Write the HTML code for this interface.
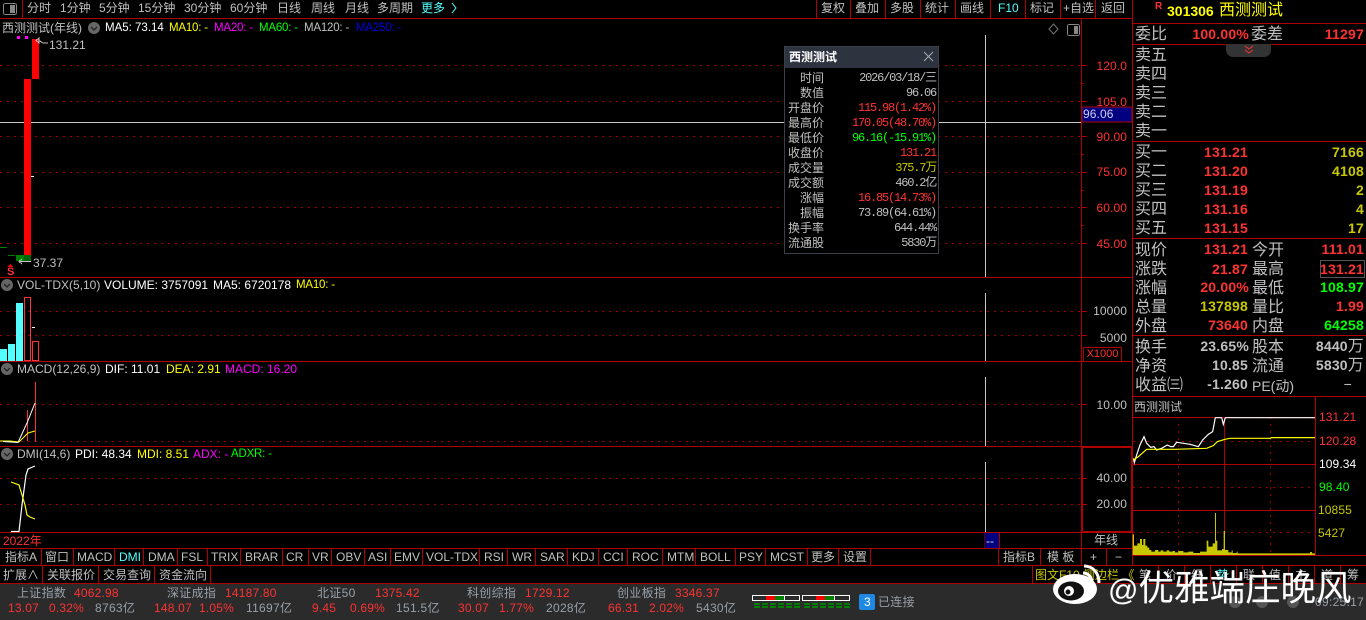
<!DOCTYPE html>
<html lang="zh"><head><meta charset="utf-8"><title>西测测试</title>
<style>
html,body{margin:0;padding:0;background:#000;width:1366px;height:620px;overflow:hidden}
body{position:relative;font:12px/14px "Liberation Sans","WenQuanYi Zen Hei","Noto Sans CJK SC",sans-serif;color:#c0c0c0}
svg.a{position:absolute;left:0;top:0}
.t{position:absolute;white-space:nowrap;line-height:14px}
.r{color:#ff3232}.y{color:#ffff00}.m{color:#ff00ff}.g{color:#00ff00}.w{color:#fff}.c{color:#54ffff}.b{color:#0000e0}.d{color:#c8c800}
.l{font-size:16px;line-height:18px;letter-spacing:0;margin-top:1px}
.l2{margin-top:2px}
.n{font-weight:bold;font-size:14px;line-height:18px;letter-spacing:.2px}
.ax{font-size:12px;letter-spacing:.1px}
.ma{font-size:11.5px;letter-spacing:-.2px}
.p{font-family:"Liberation Mono","WenQuanYi Zen Hei",monospace;font-size:12px;letter-spacing:-1.2px}
.pl{font-size:12px}
.s{font-size:12px;letter-spacing:.3px;color:#98a0a8}
.st{font-size:12px;letter-spacing:.2px}
#pop{position:absolute;left:784px;top:46px;width:153px;height:206px;background:#000;border:1px solid #3a3f4a}
#poph{position:absolute;left:0;top:0;width:153px;height:21px;background:#2e3340}
#tab{position:absolute;left:1226px;top:44px;width:45px;height:13px;background:#333;border-radius:0 0 7px 7px}
.wm{position:absolute;left:1108px;top:568px;font-size:35.5px;line-height:40px;color:#fff;white-space:nowrap;font-family:"Liberation Sans","Noto Sans CJK SC",sans-serif;text-shadow:0 0 1px #555}
.wm span{font-size:30px}
</style></head><body>

<svg class="a" width="1366" height="620" shape-rendering="crispEdges" fill="none">
<rect x="0" y="584" width="1366" height="36" fill="#2b2b2b"/>
<!-- dotted grid -->
<g stroke="#a00000" stroke-dasharray="2 5">
<path d="M0 65.5H1081M0 101.5H1081M0 136.5H1081M0 172.5H1081M0 207.5H1081M0 243.5H1081"/>
<path d="M0 311.5H1081M0 335.5H1081M0 404.5H1081M0 441.5H1081M0 478.5H1081M0 504.5H1081"/>
<path d="M1133 441.5H1315M1133 487.5H1315M1133 532.5H1315M1178.5 417V555M1270.5 417V555"/>
</g>
<!-- main structural lines -->
<g stroke="#b00000">
<path d="M0 18.5H1132M0 277.5H1132M0 361.5H1132M0 446.5H1132M0 532.5H1132M0 548.5H1132M0 565.5H1366M0 583.5H1366"/>
<path d="M22.5 0V18M816.5 0V18M850.5 0V18M885.5 0V18M920.5 0V18M955.5 0V18M990.5 0V18M1025.5 0V18M1060.5 0V18M1095.5 0V18"/>
<path d="M1081.5 18V548M1132.5 0V565M985 533V548M999.5 533V548"/>
<path d="M1133 23.5H1366M1133 44.5H1366M1133 141.5H1366M1133 238.5H1366M1133 335.5H1366M1133 396.5H1366M1133 417.5H1315M1133 464.5H1315M1133 510.5H1315M1133 555.5H1366M1315.5 397V555M1224.5 417V555"/>
<path d="M41.5 549V565M73.5 549V565M114.5 549V565M143.5 549V565M177.5 549V565M207.5 549V565M240.5 549V565M282.5 549V565M308.5 549V565M331.5 549V565M364.5 549V565M390.5 549V565M422.5 549V565M479.5 549V565M507.5 549V565M535.5 549V565M567.5 549V565M598.5 549V565M627.5 549V565M662.5 549V565M695.5 549V565M735.5 549V565M765.5 549V565M807.5 549V565M838.5 549V565M870.5 549V565M998.5 549V565M1040.5 549V565M1081.5 549V565M1106.5 549V565"/>
<path d="M42.5 566V583M98.5 566V583M154.5 566V583M210.5 566V583M1032.5 566V583M1158.5 566V583M1184.5 566V583M1210.5 566V583M1236.5 566V583M1262.5 566V583M1288.5 566V583M1314.5 566V583M1340.5 566V583"/>
<!-- axis ticks -->
<path d="M1081 65.5H1087M1081 83.5H1084M1081 101.5H1087M1081 136.5H1087M1081 154.5H1084M1081 172.5H1087M1081 190.5H1084M1081 207.5H1087M1081 225.5H1084M1081 243.5H1087M1081 311.5H1087M1081 335.5H1087M1081 404.5H1087M1081 478.5H1087M1081 504.5H1087"/>
<rect x="1082" y="447" width="50" height="85" stroke-width="2"/>
</g>
<!-- crosshair -->
<g stroke="#c8c8c8"><path d="M0 122.5H1081M985.5 35V277M985.5 293V361M985.5 377V446M985.5 462V532"/></g>
<rect x="1082" y="107" width="50" height="15" fill="#000080" stroke="#b00000"/>
<rect x="985" y="533" width="14" height="15" fill="#000080"/>
<!-- candles -->
<rect x="32" y="39" width="7" height="40" fill="#ff0000"/>
<rect x="24" y="79" width="7" height="176" fill="#ff0000"/>
<rect x="16" y="255" width="8" height="6" fill="#008000"/><rect x="24" y="255" width="7" height="6" fill="#006400"/>
<path d="M0 247.5H7M8 255.5H15" stroke="#008000"/>
<path d="M31 176.5H34" stroke="#fff"/>
<rect x="17" y="36" width="3" height="3" fill="#ff00ff"/><rect x="25" y="36" width="3" height="3" fill="#ff00ff"/>
<path d="M36 40.5L39 38V43ZM39 40.5L43 43H48" stroke="#c0c0c0"/>
<path d="M19 261.5H31M22 259L19 261.5L22 264" stroke="#c0c0c0"/>
<path d="M10 264L7 267H13Z" fill="#f00"/>
<!-- volume -->
<rect x="0" y="349" width="7" height="12" fill="#54ffff"/><rect x="8" y="344" width="7" height="17" fill="#54ffff"/><rect x="16" y="303" width="7" height="58" fill="#54ffff"/>
<rect x="24.5" y="297.5" width="6" height="63" stroke="#ff3232"/><rect x="32.5" y="341.5" width="6" height="19" stroke="#ff3232"/>
<path d="M32 327.5H35" stroke="#fff"/>
<g shape-rendering="auto">
<!-- macd -->
<path d="M27.5 410V441M35.5 382V442" stroke="#ff3232" shape-rendering="crispEdges"/>
<path d="M0 441H10L19 442" stroke="#ffff00"/>
<path d="M19 442L28 433L35 431" stroke="#ffff00"/>
<path d="M3 441.5L18 442.5L27 423L35 403" stroke="#fff"/>
<!-- dmi -->
<path d="M11 531.5H19L22 505L26 475L28 469L35 466" stroke="#fff" stroke-width="1.2"/>
<path d="M11 482L19 485L22 495L25 505L27 515L30 517L35 519" stroke="#ffff00" stroke-width="1.2"/>
<!-- mini chart -->
<g transform="translate(1130 395) scale(.3333)">
<path d="M8 478V418H12V452H22V445H30V432H36V450H40V432H46V452H52V458H58V465H64V470H75V465H85V470H92V466H100V470H110V466H118V470H128V468H135V472H145V468H160V472H175V470H190V474H210V470H230V437H235V455H248V445H255V354H258V437H262V466H276V462H281V408H285V465H295V472H305V466H308V474H320V470H323V475H540V471H546V475H555V480H8Z" fill="#c8c800"/>
<path d="M10 190L13 203L20 180L30 150L42 125L50 145L62 157L72 155L80 165L95 160L112 150L122 155L130 155L140 142L160 145L180 148L205 155L218 135L235 118L248 110L256 68H275L280 88L286 68H555" stroke="#fff" stroke-width="3.6"/>
<path d="M10 195L25 185L50 163H135L230 160L250 152L262 140L285 133L300 130H420L425 128H555" stroke="#ffff00" stroke-width="3.6"/>
</g>
</g>
<!-- small icons -->
<rect x="3.5" y="3.5" width="13" height="11" rx="2" stroke="#888"/><rect x="10" y="5" width="5" height="8" fill="#888"/>
<rect x="1067.5" y="24.5" width="12" height="11" rx="2" stroke="#888"/><rect x="1074" y="26" width="4" height="8" fill="#888"/>
<path d="M1053.5 24L1058 29L1053.5 34L1049 29Z" stroke="#777" shape-rendering="auto"/>
<rect x="1320.5" y="260.5" width="44" height="17" stroke="#555"/>
<!-- gauges -->
<g stroke="#fff"><rect x="752.5" y="595.5" width="47" height="5"/><rect x="802.5" y="595.5" width="47" height="5"/>
<path d="M766.5 596V600M775.5 596V600M784.5 596V600M816.5 596V600M825.5 596V600M834.5 596V600"/></g>
<rect x="766" y="596" width="9" height="4" fill="#f00"/><rect x="775" y="596" width="9" height="4" fill="#008000"/>
<rect x="816" y="596" width="9" height="4" fill="#f00"/><rect x="825" y="596" width="9" height="4" fill="#008000"/>
<path d="M754 604H760M762 604H768M770 604H776M778 604H784M786 604H792M794 604H800M804 604H810M812 604H818M820 604H826M828 604H834M836 604H842M844 604H850M754 607H760M762 607H768M770 607H776M778 607H784M786 607H792M794 607H800M804 607H810M812 607H818M820 607H826M828 607H834M836 607H842M844 607H850" stroke="#008000" stroke-width="2"/>
<rect x="859" y="594" width="16" height="16" rx="2" fill="#1e88e5"/>
<!-- circle toggles -->
<g shape-rendering="auto">
<circle cx="94" cy="28" r="6" fill="#666"/><path d="M91 27L94 30L97 27" stroke="#222" stroke-width="1.3"/>
<circle cx="7" cy="285" r="6" fill="#666"/><path d="M4 284L7 287L10 284" stroke="#222" stroke-width="1.3"/>
<circle cx="7" cy="369" r="6" fill="#666"/><path d="M4 368L7 371L10 368" stroke="#222" stroke-width="1.3"/>
<circle cx="7" cy="454" r="6" fill="#666"/><path d="M4 453L7 456L10 453" stroke="#222" stroke-width="1.3"/>
<path d="M452 3L456 8L452 13" stroke="#54ffff"/>
</g>
</svg>

<!-- toolbar -->
<span class="t" style="left:27px;top:1px">分时</span><span class="t" style="left:60px;top:1px">1分钟</span><span class="t" style="left:99px;top:1px">5分钟</span><span class="t" style="left:138px;top:1px">15分钟</span><span class="t" style="left:184px;top:1px">30分钟</span><span class="t" style="left:230px;top:1px">60分钟</span><span class="t" style="left:277px;top:1px">日线</span><span class="t" style="left:311px;top:1px">周线</span><span class="t" style="left:345px;top:1px">月线</span><span class="t" style="left:377px;top:1px">多周期</span><span class="t c" style="left:421px;top:1px">更多</span>
<span class="t" style="left:821px;top:1px">复权</span><span class="t" style="left:855px;top:1px">叠加</span><span class="t" style="left:890px;top:1px">多股</span><span class="t" style="left:925px;top:1px">统计</span><span class="t" style="left:960px;top:1px">画线</span><span class="t c" style="left:998px;top:1px">F10</span><span class="t" style="left:1030px;top:1px">标记</span><span class="t" style="left:1063px;top:1px">+自选</span><span class="t" style="left:1101px;top:1px">返回</span>

<!-- main legend -->
<span class="t" style="left:2px;top:21px">西测测试(年线)</span>
<span class="t w" style="left:105px;top:21px;font-size:11.5px">MA5: 73.14</span><span class="t y ma" style="left:169px;top:21px">MA10: -</span><span class="t m ma" style="left:214px;top:21px">MA20: -</span><span class="t g ma" style="left:259px;top:21px">MA60: -</span><span class="t ma" style="left:304px;top:21px">MA120: -</span><span class="t b ma" style="left:356px;top:21px">MA250: -</span>
<span class="t" style="left:49px;top:38px">131.21</span>
<span class="t" style="left:33px;top:256px">37.37</span>
<span class="t r" style="left:7px;top:265px;font-weight:bold;font-size:11px">S</span>

<!-- axis -->
<span class="t r ax" style="right:239px;top:59px">120.0</span><span class="t r ax" style="right:239px;top:95px">105.0</span><span class="t r ax" style="right:239px;top:130px">90.00</span><span class="t r ax" style="right:239px;top:165px">75.00</span><span class="t r ax" style="right:239px;top:201px">60.00</span><span class="t r ax" style="right:239px;top:237px">45.00</span>
<span class="t ax" style="left:1083px;top:107px;color:#d0d0f0">96.06</span>
<span class="t ax" style="right:239px;top:304px">10000</span><span class="t ax" style="right:239px;top:331px">5000</span>
<span class="t r" style="left:1083px;top:347px;width:37px;border:1px solid #b00000;height:13px;line-height:13px;text-align:center;font-size:11px">X1000</span>
<span class="t ax" style="right:239px;top:398px">10.00</span><span class="t ax" style="right:239px;top:471px">40.00</span><span class="t ax" style="right:239px;top:497px">20.00</span>

<!-- indicators -->
<span class="t" style="left:17px;top:278px">VOL-TDX(5,10)</span><span class="t w" style="left:104px;top:278px">VOLUME: 3757091</span><span class="t w" style="left:213px;top:278px">MA5: 6720178</span><span class="t y ma" style="left:296px;top:278px">MA10: -</span>
<span class="t" style="left:17px;top:362px">MACD(12,26,9)</span><span class="t w" style="left:105px;top:362px">DIF: 11.01</span><span class="t y" style="left:166px;top:362px">DEA: 2.91</span><span class="t m" style="left:225px;top:362px">MACD: 16.20</span>
<span class="t" style="left:17px;top:447px">DMI(14,6)</span><span class="t w" style="left:75px;top:447px">PDI: 48.34</span><span class="t y" style="left:137px;top:447px">MDI: 8.51</span><span class="t m" style="left:193px;top:447px">ADX: -</span><span class="t g ma" style="left:231px;top:447px">ADXR: -</span>

<span class="t r" style="left:3px;top:534px">2022年</span><span class="t" style="left:1094px;top:533px">年线</span><span class="t" style="left:986px;top:534px;color:#ddd">--</span>

<!-- tabs -->
<span class="t" style="left:5px;top:550px">指标A</span><span class="t" style="left:45px;top:550px">窗口</span><span class="t" style="left:77px;top:550px">MACD</span><span class="t c" style="left:119px;top:550px">DMI</span><span class="t" style="left:148px;top:550px">DMA</span><span class="t" style="left:181px;top:550px">FSL</span><span class="t" style="left:211px;top:550px">TRIX</span><span class="t" style="left:245px;top:550px">BRAR</span><span class="t" style="left:286px;top:550px">CR</span><span class="t" style="left:312px;top:550px">VR</span><span class="t" style="left:336px;top:550px">OBV</span><span class="t" style="left:368px;top:550px">ASI</span><span class="t" style="left:394px;top:550px">EMV</span><span class="t" style="left:426px;top:550px">VOL-TDX</span><span class="t" style="left:484px;top:550px">RSI</span><span class="t" style="left:512px;top:550px">WR</span><span class="t" style="left:540px;top:550px">SAR</span><span class="t" style="left:572px;top:550px">KDJ</span><span class="t" style="left:603px;top:550px">CCI</span><span class="t" style="left:632px;top:550px">ROC</span><span class="t" style="left:667px;top:550px">MTM</span><span class="t" style="left:700px;top:550px">BOLL</span><span class="t" style="left:739px;top:550px">PSY</span><span class="t" style="left:770px;top:550px">MCST</span><span class="t" style="left:811px;top:550px">更多</span><span class="t" style="left:843px;top:550px">设置</span>
<span class="t" style="left:1003px;top:550px">指标B</span><span class="t" style="left:1047px;top:550px">模 板</span><span class="t" style="left:1090px;top:550px">+</span><span class="t" style="left:1115px;top:550px">−</span>
<span class="t" style="left:3px;top:568px">扩展∧</span><span class="t" style="left:47px;top:568px">关联报价</span><span class="t" style="left:103px;top:568px">交易查询</span><span class="t" style="left:159px;top:568px">资金流向</span>
<span class="t d" style="left:1035px;top:568px">图文F10</span><span class="t d" style="left:1083px;top:568px">侧边栏 《</span>
<span class="t" style="left:1139px;top:568px">笔</span><span class="t" style="left:1165px;top:568px">价</span><span class="t" style="left:1191px;top:568px">细</span><span class="t c" style="left:1217px;top:568px">势</span><span class="t" style="left:1243px;top:568px">联</span><span class="t" style="left:1269px;top:568px">值</span><span class="t" style="left:1295px;top:568px">主</span><span class="t" style="left:1321px;top:568px">道</span><span class="t" style="left:1347px;top:568px">筹</span>

<!-- status bar -->
<span class="t s" style="left:17px;top:586px">上证指数</span><span class="t r st" style="left:74px;top:586px">4062.98</span><span class="t s" style="left:167px;top:586px">深证成指</span><span class="t r st" style="left:225px;top:586px">14187.80</span><span class="t s" style="left:317px;top:586px">北证50</span><span class="t r st" style="left:375px;top:586px">1375.42</span><span class="t s" style="left:467px;top:586px">科创综指</span><span class="t r st" style="left:525px;top:586px">1729.12</span><span class="t s" style="left:617px;top:586px">创业板指</span><span class="t r st" style="left:675px;top:586px">3346.37</span>
<span class="t r st" style="left:8px;top:601px">13.07</span><span class="t r st" style="left:49px;top:601px">0.32%</span><span class="t s" style="left:95px;top:601px">8763亿</span><span class="t r st" style="left:154px;top:601px">148.07</span><span class="t r st" style="left:199px;top:601px">1.05%</span><span class="t s" style="left:246px;top:601px">11697亿</span><span class="t r st" style="left:312px;top:601px">9.45</span><span class="t r st" style="left:350px;top:601px">0.69%</span><span class="t s" style="left:396px;top:601px">151.5亿</span><span class="t r st" style="left:458px;top:601px">30.07</span><span class="t r st" style="left:499px;top:601px">1.77%</span><span class="t s" style="left:546px;top:601px">2028亿</span><span class="t r st" style="left:608px;top:601px">66.31</span><span class="t r st" style="left:649px;top:601px">2.02%</span><span class="t s" style="left:696px;top:601px">5430亿</span>
<span class="t w" style="left:864px;top:595px">3</span><span class="t s" style="left:878px;top:595px">已连接</span>
<span class="t s" style="left:1315px;top:595px">09:25.17</span>

<!-- popup -->
<div id="pop"><div id="poph"></div></div>
<span class="t w" style="left:789px;top:50px;font-weight:bold">西测测试</span>
<svg class="a" width="1366" height="620" style="pointer-events:none"><path d="M924 52L933 61M933 52L924 61" stroke="#aaa" fill="none"/></svg>
<span class="t pl" style="right:542px;top:71px">时间</span><span class="t p" style="right:430px;top:71px">2026/03/18/三</span>
<span class="t pl" style="right:542px;top:86px">数值</span><span class="t p" style="right:430px;top:86px">96.06</span>
<span class="t pl" style="right:542px;top:101px">开盘价</span><span class="t p r" style="right:430px;top:101px">115.98(1.42%)</span>
<span class="t pl" style="right:542px;top:116px">最高价</span><span class="t p r" style="right:430px;top:116px">170.05(48.70%)</span>
<span class="t pl" style="right:542px;top:131px">最低价</span><span class="t p g" style="right:430px;top:131px">96.16(-15.91%)</span>
<span class="t pl" style="right:542px;top:146px">收盘价</span><span class="t p r" style="right:430px;top:146px">131.21</span>
<span class="t pl" style="right:542px;top:161px">成交量</span><span class="t p d" style="right:430px;top:161px">375.7万</span>
<span class="t pl" style="right:542px;top:176px">成交额</span><span class="t p" style="right:430px;top:176px">460.2亿</span>
<span class="t pl" style="right:542px;top:191px">涨幅</span><span class="t p r" style="right:430px;top:191px">16.85(14.73%)</span>
<span class="t pl" style="right:542px;top:206px">振幅</span><span class="t p" style="right:430px;top:206px">73.89(64.61%)</span>
<span class="t pl" style="right:542px;top:221px">换手率</span><span class="t p" style="right:430px;top:221px">644.44%</span>
<span class="t pl" style="right:542px;top:236px">流通股</span><span class="t p" style="right:430px;top:236px">5830万</span>

<!-- right panel -->
<span class="t r" style="left:1155px;top:0px;font-size:10px;font-weight:bold">R</span>
<span class="t y" style="left:1167px;top:4px;font-weight:bold;font-size:14px">301306</span><span class="t y" style="left:1219px;top:3px;font-size:16px;line-height:16px">西测测试</span>
<span class="t l" style="left:1135px;top:25px">委比</span><span class="t n r" style="right:117px;top:25px">100.00%</span><span class="t l" style="left:1251px;top:25px">委差</span><span class="t n r" style="right:2px;top:25px">11297</span>
<div id="tab"></div><svg class="a" width="1366" height="620"><path d="M1245 46L1249 49L1253 46M1245 50L1249 53L1253 50" stroke="#ff3232" fill="none"/></svg>
<span class="t l" style="left:1135px;top:46px">卖五</span><span class="t l" style="left:1135px;top:65px">卖四</span><span class="t l" style="left:1135px;top:84px">卖三</span><span class="t l" style="left:1135px;top:103px">卖二</span><span class="t l" style="left:1135px;top:122px">卖一</span>

<span class="t l" style="left:1135px;top:143px">买一</span><span class="t n r" style="right:118px;top:143px">131.21</span><span class="t n d" style="right:2px;top:143px">7166</span>
<span class="t l" style="left:1135px;top:162px">买二</span><span class="t n r" style="right:118px;top:162px">131.20</span><span class="t n d" style="right:2px;top:162px">4108</span>
<span class="t l" style="left:1135px;top:181px">买三</span><span class="t n r" style="right:118px;top:181px">131.19</span><span class="t n d" style="right:2px;top:181px">2</span>
<span class="t l" style="left:1135px;top:200px">买四</span><span class="t n r" style="right:118px;top:200px">131.16</span><span class="t n d" style="right:2px;top:200px">4</span>
<span class="t l" style="left:1135px;top:219px">买五</span><span class="t n r" style="right:118px;top:219px">131.15</span><span class="t n d" style="right:2px;top:219px">17</span>

<span class="t l l2" style="left:1135px;top:240px">现价</span><span class="t n r" style="right:118px;top:240px">131.21</span><span class="t l l2" style="left:1252px;top:240px">今开</span><span class="t n r" style="right:2px;top:240px">111.01</span>
<span class="t l" style="left:1135px;top:260px">涨跌</span><span class="t n r" style="right:118px;top:260px">21.87</span><span class="t l" style="left:1252px;top:260px">最高</span><span class="t n r" style="right:2px;top:260px">131.21</span>
<span class="t l l2" style="left:1135px;top:278px">涨幅</span><span class="t n r" style="right:117px;top:278px">20.00%</span><span class="t l l2" style="left:1252px;top:278px">最低</span><span class="t n g" style="right:2px;top:278px">108.97</span>
<span class="t l l2" style="left:1135px;top:297px">总量</span><span class="t n d" style="right:118px;top:297px">137898</span><span class="t l l2" style="left:1252px;top:297px">量比</span><span class="t n r" style="right:2px;top:297px">1.99</span>
<span class="t l l2" style="left:1135px;top:316px">外盘</span><span class="t n r" style="right:118px;top:316px">73640</span><span class="t l l2" style="left:1252px;top:316px">内盘</span><span class="t n g" style="right:2px;top:316px">64258</span>
<span class="t l l2" style="left:1135px;top:337px">换手</span><span class="t n" style="right:117px;top:337px">23.65%</span><span class="t l l2" style="left:1252px;top:337px">股本</span><span class="t n" style="right:2px;top:337px">8440<span style="font-weight:normal;font-size:16px">万</span></span>
<span class="t l l2" style="left:1135px;top:356px">净资</span><span class="t n" style="right:118px;top:356px">10.85</span><span class="t l l2" style="left:1252px;top:356px">流通</span><span class="t n" style="right:2px;top:356px">5830<span style="font-weight:normal;font-size:16px">万</span></span>
<span class="t l l2" style="left:1135px;top:375px">收益㈢</span><span class="t n" style="right:118px;top:375px">-1.260</span><span class="t l l2" style="left:1252px;top:375px;font-size:14px">PE(动)</span><span class="t n" style="right:14px;top:375px;font-weight:normal">−</span>

<span class="t" style="left:1134px;top:400px">西测测试</span>
<span class="t r ax" style="left:1319px;top:410px">131.21</span><span class="t r ax" style="left:1319px;top:434px">120.28</span><span class="t w ax" style="left:1319px;top:457px">109.34</span><span class="t g ax" style="left:1319px;top:480px">98.40</span><span class="t d ax" style="left:1318px;top:503px">10855</span><span class="t d ax" style="left:1318px;top:526px">5427</span>

<!-- watermark -->
<svg class="a" width="1366" height="620">
<g fill="#555"><circle cx="1235" cy="602" r="6"/><circle cx="1262" cy="602" r="6"/><circle cx="1293" cy="602" r="6"/></g>
<ellipse cx="1075" cy="589" rx="22" ry="15" fill="#fff"/>
<ellipse cx="1071" cy="591" rx="13" ry="9.5" fill="#111"/>
<circle cx="1069" cy="591" r="5" fill="#fff"/><circle cx="1068" cy="592" r="2.5" fill="#111"/>
<path d="M1084 566C1093 566 1099 573 1099 583" stroke="#fff" stroke-width="3" fill="none"/>
<path d="M1083 573C1088 573 1092 577 1092 583" stroke="#fff" stroke-width="3" fill="none"/>
</svg>
<div class="wm"><span>@</span>优雅端庄晚风</div>
</body></html>
